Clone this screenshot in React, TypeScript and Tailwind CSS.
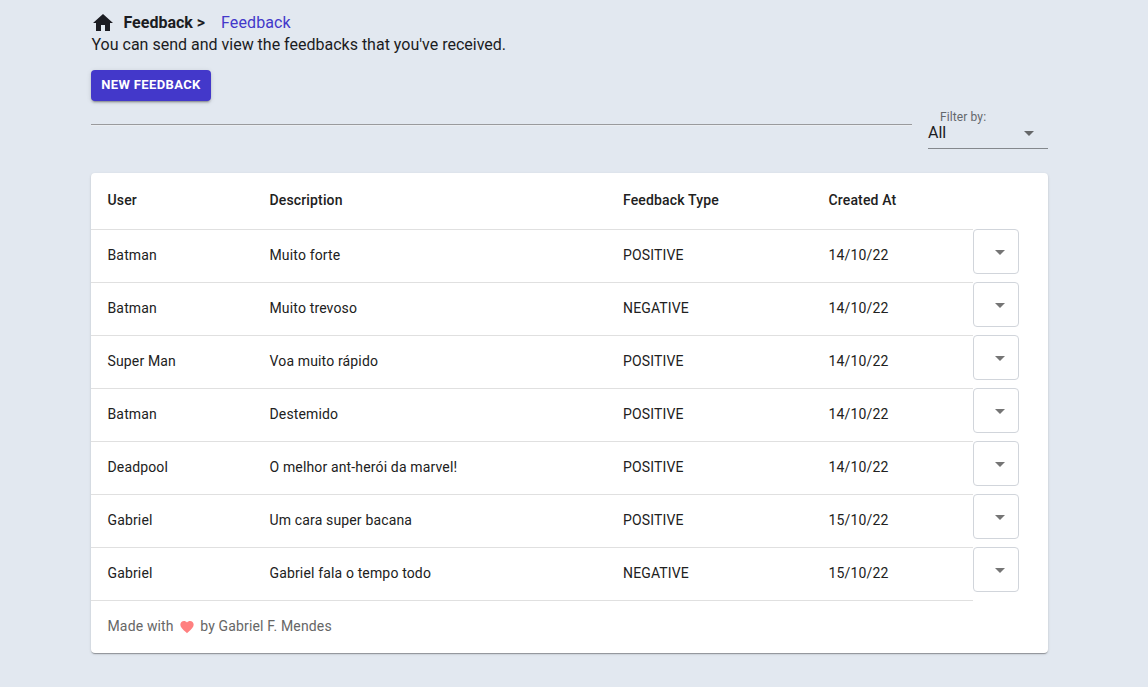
type Feedback = {
  user: string;
  description: string;
  type: "POSITIVE" | "NEGATIVE";
  createdAt: string;
};

const feedbacks: Feedback[] = [
  { user: "Batman", description: "Muito forte", type: "POSITIVE", createdAt: "14/10/22" },
  { user: "Batman", description: "Muito trevoso", type: "NEGATIVE", createdAt: "14/10/22" },
  { user: "Super Man", description: "Voa muito rápido", type: "POSITIVE", createdAt: "14/10/22" },
  { user: "Batman", description: "Destemido", type: "POSITIVE", createdAt: "14/10/22" },
  { user: "Deadpool", description: "O melhor ant-herói da marvel!", type: "POSITIVE", createdAt: "14/10/22" },
  { user: "Gabriel", description: "Um cara super bacana", type: "POSITIVE", createdAt: "15/10/22" },
  { user: "Gabriel", description: "Gabriel fala o tempo todo", type: "NEGATIVE", createdAt: "15/10/22" },
];

const columns = "grid grid-cols-[162px_353.5px_205.5px_161px_75px]";
const cell = "border-b border-[#e0e0e0] pt-[15px] pr-4 pl-[16.5px]";

function Icon({ d, className }: { d: string; className: string }) {
  return (
    <svg viewBox="0 0 24 24" className={className} fill="currentColor" aria-hidden="true">
      <path d={d} />
    </svg>
  );
}

const HOME = "M10 20v-6h4v6h5v-8h3L12 3 2 12h3v8z";
const ARROW = "m7 10 5 5 5-5z";
const HEART =
  "m12 21.35-1.45-1.32C5.4 15.36 2 12.28 2 8.5 2 5.42 4.42 3 7.5 3c1.74 0 3.41.81 4.5 2.09C13.09 3.81 14.76 3 16.5 3 19.58 3 22 5.42 22 8.5c0 3.78-3.4 6.86-8.55 11.54z";

function Header() {
  return (
    <header className="text-base leading-[22px]">
      <div className="flex h-[22px] items-center">
        <Icon d={HOME} className="size-6 shrink-0" />
        <span className="ml-[8.5px] font-bold">Feedback &gt;</span>
        <a href="#" className="ml-4 tracking-[0.1px] text-[#4338ca]">Feedback</a>
      </div>
      <p className="pl-[0.5px]">You can send and view the feedbacks that you've received.</p>
    </header>
  );
}

function Filter() {
  return (
    <div className="h-10 w-[120px] border-b border-[#84888d]">
      <div className="pl-3 text-xs leading-4 tracking-[0.11px] text-[#64676c]">Filter by:</div>
      <div className="flex h-6 items-center justify-between pr-[7px]">
        <span className="-mt-2 text-base leading-6">All</span>
        <Icon d={ARROW} className="-mt-[9px] size-6 text-[#656769]" />
      </div>
    </div>
  );
}

function Row({ item }: { item: Feedback }) {
  return (
    <div className={`${columns} h-[53px]`}>
      <div className={cell}>{item.user}</div>
      <div className={cell}>{item.description}</div>
      <div className={cell}>{item.type}</div>
      <div className={cell}>{item.createdAt}</div>
      <button
        type="button"
        aria-label="Actions"
        className="-mt-px flex h-[45px] w-[46px] items-center justify-end rounded border border-[#d1d5db] pr-1.5"
      >
        <Icon d={ARROW} className="size-6 text-[#757575]" />
      </button>
    </div>
  );
}

export default function App() {
  return (
    <main className="min-h-screen bg-[#e2e8f0] pt-3 pr-[100px] pl-[91px] font-['Roboto',sans-serif] text-[#1b1c22]">
      <Header />
      <button
        type="button"
        className="mt-[14px] flex h-[31px] w-[120px] items-center justify-center rounded bg-[#4338ca] pb-px text-[13px] font-bold tracking-[0.37px] text-white shadow-[0_3px_1px_-2px_rgba(0,0,0,0.2),0_2px_2px_0_rgba(0,0,0,0.14),0_1px_5px_0_rgba(0,0,0,0.12)]"
      >
        NEW FEEDBACK
      </button>
      <div className="mt-2 flex items-start gap-4">
        <hr className="mt-[15px] h-0.5 flex-1 border-t border-b border-t-[#999a9d] border-b-[#ebeef2]" />
        <Filter />
      </div>
      <section className="mt-6 h-[480px] rounded bg-white text-sm leading-5 tracking-[0.15px] text-[#212121] shadow-[0_2px_1px_-1px_rgba(0,0,0,0.2),0_1px_1px_0_rgba(0,0,0,0.14),0_1px_3px_0_rgba(0,0,0,0.12)]">
        <div className={`${columns} h-[57px] leading-6 font-medium`}>
          <div className={cell}>User</div>
          <div className={cell}>Description</div>
          <div className={cell}>Feedback Type</div>
          <div className={cell}>Created At</div>
        </div>
        {feedbacks.map((item, index) => (
          <Row key={index} item={item} />
        ))}
        <footer className="flex h-[52px] items-center pr-4 pb-0.5 pl-[16.5px] text-[#666666]">
          <span>Made with</span>
          <Icon d={HEART} className="mt-0.5 mr-[5.5px] ml-[5px] size-4 text-[#ff8080]" />
          <span>by Gabriel F. Mendes</span>
        </footer>
      </section>
    </main>
  );
}
